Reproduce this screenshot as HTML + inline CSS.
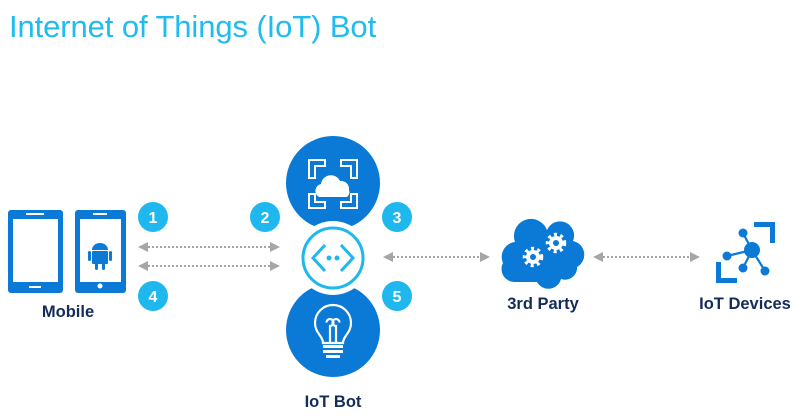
<!DOCTYPE html>
<html><head><meta charset="utf-8"><style>
html,body{margin:0;padding:0;background:#fff;width:796px;height:419px;overflow:hidden}
.t{position:absolute;left:9px;top:9px;font:300 31px "Liberation Sans",sans-serif;color:#1fbcef;letter-spacing:-0.1px;white-space:nowrap}
svg{position:absolute;left:0;top:0}
</style></head><body>
<div class="t">Internet of Things (IoT) Bot</div>
<svg width="796" height="419" viewBox="0 0 796 419" font-family="Liberation Sans, sans-serif">
<defs>
<marker id="a" markerWidth="10" markerHeight="10" refX="0" refY="5" orient="auto-start-reverse" markerUnits="userSpaceOnUse"><path d="M0,0 L10,5 L0,10z" fill="#a6a6a6"/></marker>
</defs>
<!-- phones -->
<rect x="8" y="210" width="55" height="83" rx="3" fill="#0a7ad6"/>
<rect x="13" y="219" width="45" height="63" fill="#fff"/>
<rect x="26" y="213" width="18" height="2" fill="#fff"/>
<rect x="29" y="286" width="12" height="2" fill="#fff"/>
<rect x="75" y="210" width="51" height="83" rx="3" fill="#0a7ad6"/>
<rect x="80" y="219" width="41" height="63" fill="#fff"/>
<rect x="93" y="213" width="14" height="2" fill="#fff"/>
<circle cx="100" cy="286" r="2.5" fill="#fff"/>
<g fill="#0a7ad6"><path d="M92,250 a8,7 0 0 1 16,0z"/><rect x="92" y="251" width="16" height="13" rx="1"/><rect x="88" y="251" width="3" height="10" rx="1.5"/><rect x="109" y="251" width="3" height="10" rx="1.5"/><rect x="95" y="262" width="3" height="8" rx="1.5"/><rect x="102" y="262" width="3" height="8" rx="1.5"/></g>
<text x="68" y="317" text-anchor="middle" font-size="16.5" font-weight="bold" fill="#142c57">Mobile</text>
<!-- arrows -->
<g stroke="#a6a6a6" stroke-width="2" stroke-dasharray="2,2" fill="none">
<line x1="148" y1="247" x2="270" y2="247" marker-start="url(#a)" marker-end="url(#a)"/>
<line x1="148" y1="266" x2="270" y2="266" marker-start="url(#a)" marker-end="url(#a)"/>
<line x1="393" y1="257" x2="480" y2="257" marker-start="url(#a)" marker-end="url(#a)"/>
<line x1="603" y1="257" x2="690" y2="257" marker-start="url(#a)" marker-end="url(#a)"/>
</g>
<!-- numbered -->
<g fill="#1eb8ee"><circle cx="153" cy="217" r="15"/><circle cx="265" cy="217" r="15"/><circle cx="397" cy="217" r="15"/><circle cx="153" cy="296" r="15"/><circle cx="397" cy="296" r="15"/></g>
<g fill="#fff" font-size="16" font-weight="bold" text-anchor="middle"><text x="153" y="223">1</text><text x="265" y="223">2</text><text x="397" y="223">3</text><text x="153" y="302">4</text><text x="397" y="302">5</text></g>
<!-- bot circles -->
<circle cx="333" cy="183" r="47" fill="#0a7ad6"/>
<circle cx="333" cy="330" r="47" fill="#0a7ad6"/>
<circle cx="333" cy="258" r="37" fill="#fff"/>
<circle cx="333" cy="258" r="30" fill="#fff" stroke="#1eb8ee" stroke-width="3"/>
<g stroke="#1eb8ee" stroke-width="3" fill="none"><path d="M325,245 l-12,13 l12,13"/><path d="M341,245 l12,13 l-12,13"/></g>
<circle cx="329" cy="258" r="2.5" fill="#1eb8ee"/><circle cx="337" cy="258" r="2.5" fill="#1eb8ee"/>
<!-- frame cloud icon -->
<g stroke="#fff" stroke-width="2" fill="none"><path d="M309,167 v-7 h16 v6 h-10 v12 h-6z"/><path d="M357,167 v-7 h-16 v6 h10 v12 h6z"/><path d="M309,194 v14 h16 v-6 h-10 v-8z"/><path d="M357,194 v14 h-16 v-6 h10 v-8z"/></g>
<path d="M319,197 a7,7 0 0 1 2,-13 a10,10 0 0 1 19,-3 a8,8 0 0 1 9,9 a6,6 0 0 1 -2,7z" fill="#fff"/>
<!-- bulb -->
<g stroke="#fff" stroke-width="2.2" fill="none"><path d="M323,343 c0,-7 -8,-10 -8,-20 a18,18 0 0 1 36,0 c0,10 -8,13 -8,20z"/><path d="M330,343 v-17 a3.5,3.5 0 1 0 -3.5,-3.5"/><path d="M336,343 v-17 a3.5,3.5 0 1 1 3.5,-3.5"/></g>
<g fill="#fff"><rect x="323" y="345" width="20" height="3"/><rect x="323" y="350" width="20" height="3"/><rect x="326" y="355" width="14" height="3"/></g>
<text x="333" y="407" text-anchor="middle" font-size="16.5" font-weight="bold" fill="#142c57">IoT Bot</text>
<!-- 3rd party cloud -->
<path d="M515,282 a13,13 0 0 1 -12,-19 a15,15 0 0 1 12,-21 a17,17 0 0 1 32,-12 a14,14 0 0 1 26,11 a14,14 0 0 1 4,26 a12,12 0 0 1 -16,12 a13,13 0 0 1 -24,3 z" fill="#0a7ad6"/>
<g fill="#fff"><circle cx="533" cy="257" r="7"/><circle cx="556" cy="243" r="7"/></g>
<g stroke="#fff" stroke-width="3.5" stroke-dasharray="3,3.3"><circle cx="533" cy="257" r="8.5" fill="none"/><circle cx="556" cy="243" r="8.5" fill="none"/></g>
<g fill="#0a7ad6"><circle cx="533" cy="257" r="3"/><circle cx="556" cy="243" r="3"/></g>
<text x="543" y="309" text-anchor="middle" font-size="16.5" font-weight="bold" fill="#142c57">3rd Party</text>
<!-- IoT devices -->
<g fill="#0a7ad6"><path d="M754,222 h21 v21 h-5 v-16 h-16z"/><path d="M716,262 h5 v16 h16 v5 h-21z"/>
<circle cx="752" cy="250" r="8"/><circle cx="727" cy="256" r="4.5"/><circle cx="743" cy="233" r="4.5"/><circle cx="743" cy="268" r="4.5"/><circle cx="765" cy="271" r="4.5"/></g>
<g stroke="#0a7ad6" stroke-width="2.2"><line x1="752" y1="250" x2="727" y2="256"/><line x1="752" y1="250" x2="743" y2="233"/><line x1="752" y1="250" x2="743" y2="268"/><line x1="752" y1="250" x2="765" y2="271"/></g>
<text x="745" y="309" text-anchor="middle" font-size="16.5" font-weight="bold" fill="#142c57">IoT Devices</text>
</svg>
</body></html>
